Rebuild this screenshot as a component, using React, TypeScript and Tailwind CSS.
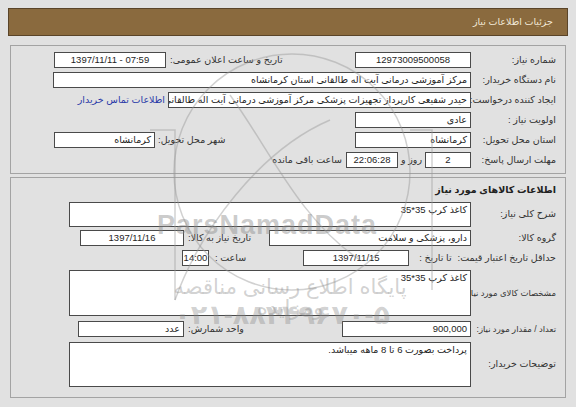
import React from "react";

type BoxProps = {
  w: string;
  h?: string;
  center?: boolean;
  ltr?: boolean;
  children?: React.ReactNode;
  extra?: string;
};

const Box = ({ w, h = "h-[16px]", center, ltr, children, extra = "" }: BoxProps) => (
  <div
    dir={ltr ? "ltr" : undefined}
    className={`${w} ${h} shrink-0 bg-white border border-[#4a4a4a] overflow-hidden whitespace-nowrap text-[#1e1e1e] leading-[14px] ${
      center ? "text-center" : "text-right"
    } ${extra || "px-[3px]"}`}
  >
    {children}
  </div>
);

const Label = ({ children, small }: { children: React.ReactNode; small?: boolean }) => (
  <div className={`w-[94px] shrink-0 pr-[9px] whitespace-nowrap ${small ? "text-[8.5px]" : ""}`}>
    {children}
  </div>
);

const Watermark = () => (
  <div className="absolute inset-0 pointer-events-none">
    <svg className="absolute left-0 top-0" width="576" height="407">
      <g fill="none" stroke="#9a9a9a" strokeOpacity="0.45" strokeWidth="1.5">
        <circle cx="292" cy="172" r="118" />
        <path d="M175 300 C 200 230, 260 150, 330 120" />
        <path d="M230 95 C 270 150, 300 220, 360 260" />
        <path d="M150 130 L 175 130 L 175 300" />
        <path d="M410 130 L 432 130 L 432 290" />
      </g>
    </svg>
    <div className="absolute left-[157px] top-[212px] text-[27px] font-bold tracking-[1px] text-[#8c8c8c]/45 font-['Liberation_Sans',sans-serif] leading-none">
      ParsNamadData
    </div>
    <div className="absolute left-[150px] top-[276px] w-[280px] text-center text-[21px] text-[#8c8c8c]/40 leading-none">
      پایگاه اطلاع رسانی مناقصه ومزایده
    </div>
    <div className="absolute left-[190px] top-[302px] w-[200px] text-center text-[27px] font-bold text-[#8c8c8c]/40 leading-none">
      ۰۲۱-۸۸۳۴۹۶۷۰-۵
    </div>
  </div>
);

export default function App() {
  return (
    <div
      dir="rtl"
      className="relative w-[576px] h-[407px] overflow-hidden bg-[#e1e1e1] px-[8px] pt-[8px] font-['Liberation_Sans','DejaVu_Sans',sans-serif] text-[9.5px] text-[#333]"
    >
      <div className="h-[28px] bg-[#8a6a3e] border border-[#5a4428] flex items-center pr-[14px] text-[#f1e8d6]">
        جزئیات اطلاعات نیاز
      </div>

      <div className="mt-[9px] mx-[2px] border border-[#a3a3a3] pt-[4px] pb-[3px] pl-[43px]">
        <div className="h-[20px] flex items-center">
          <Label>شماره نیاز:</Label>
          <Box w="w-[116px]" center ltr>
            12973009500058
          </Box>
          <div className="mr-auto flex items-center gap-[4px]">
            <span>تاریخ و ساعت اعلان عمومی:</span>
            <Box w="w-[112px]" center ltr>
              1397/11/11 - 07:59
            </Box>
          </div>
        </div>
        <div className="h-[20px] flex items-center">
          <Label>نام دستگاه خریدار:</Label>
          <Box w="w-[418px]">مرکز آموزشی درمانی آیت اله طالقانی استان کرمانشاه</Box>
        </div>
        <div className="h-[20px] flex items-center">
          <Label>ایجاد کننده درخواست:</Label>
          <Box w="w-[303px]">
            حیدر شفیعی کارپرداز تجهیزات پزشکی مرکز آموزشی درمانی آیت اله طالقانی ا
          </Box>
          <span className="mr-[3px] text-[#2a3aa8] whitespace-nowrap">اطلاعات تماس خریدار</span>
        </div>
        <div className="h-[20px] flex items-center">
          <Label>اولویت نیاز :</Label>
          <Box w="w-[116px]">عادی</Box>
        </div>
        <div className="h-[20px] flex items-center">
          <Label>استان محل تحویل:</Label>
          <Box w="w-[116px]">کرمانشاه</Box>
          <div className="mr-auto flex items-center gap-[3px]">
            <span>شهر محل تحویل:</span>
            <Box w="w-[101px]">کرمانشاه</Box>
          </div>
        </div>
        <div className="h-[20px] flex items-center">
          <Label>مهلت ارسال پاسخ:</Label>
          <Box w="w-[46px]" center ltr>
            2
          </Box>
          <span className="mx-[3px]">روز و</span>
          <Box w="w-[52px]" center ltr>
            22:06:28
          </Box>
          <span className="mr-[4px]">ساعت باقی مانده</span>
        </div>
      </div>

      <div className="mt-[3px] mx-[2px] border border-[#a3a3a3] pt-[2px] pb-[8px]">
        <div className="h-[20px] flex items-center pr-[9px] font-bold text-[#222]">
          اطلاعات کالاهای مورد نیاز
        </div>
        <div className="h-[28px] flex items-center">
          <Label>شرح کلی نیاز:</Label>
          <Box w="w-[402px]" h="h-[25px]">
            کاغذ کرپ 35*35
          </Box>
        </div>
        <div className="h-[20px] flex items-center pl-[69px]">
          <Label>گروه کالا:</Label>
          <Box w="w-[202px]">دارو، پزشکی و سلامت</Box>
          <div className="mr-auto flex items-center gap-[4px]">
            <span>تاریخ نیاز به کالا:</span>
            <Box w="w-[104px]" center ltr>
              1397/11/16
            </Box>
          </div>
        </div>
        <div className="h-[20px] flex items-center pl-[171px]">
          <div className="shrink-0 pr-[9px] whitespace-nowrap">حداقل تاریخ اعتبار قیمت:</div>
          <span className="mr-[6px] whitespace-nowrap">تا تاریخ :</span>
          <Box w="w-[106px]" extra="mr-[10px] px-[3px]" center ltr>
            1397/11/15
          </Box>
          <div className="mr-auto flex items-center gap-[6px]">
            <span>ساعت :</span>
            <Box w="w-[27px]" extra="px-0" center ltr>
              14:00
            </Box>
          </div>
        </div>
        <div className="h-[50px] flex items-center">
          <Label small>مشخصات کالای مورد نیاز:</Label>
          <Box w="w-[402px]" h="h-[46px]">
            کاغذ کرپ 35*35
          </Box>
        </div>
        <div className="h-[22px] flex items-center pl-[67px]">
          <Label small>تعداد / مقدار مورد نیاز:</Label>
          <Box w="w-[129px]">900,000</Box>
          <div className="mr-auto flex items-center gap-[4px]">
            <span>واحد شمارش:</span>
            <Box w="w-[106px]">عدد</Box>
          </div>
        </div>
        <div className="h-[49px] flex items-center">
          <Label>توضیحات خریدار:</Label>
          <Box w="w-[402px]" h="h-[45px]">
            پرداخت بصورت 6 تا 8 ماهه میباشد.
          </Box>
        </div>
      </div>

      <Watermark />
    </div>
  );
}
